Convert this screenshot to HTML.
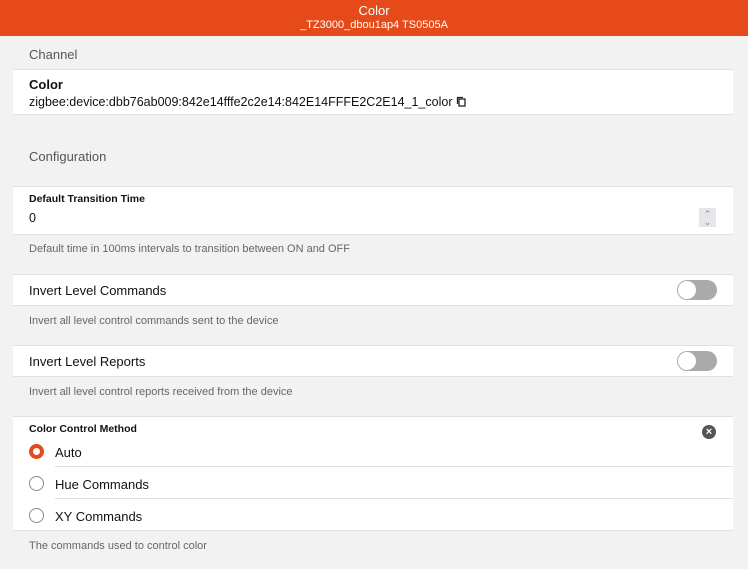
<!DOCTYPE html>
<html><head><style>
body{margin:0;width:748px;height:569px;background:#f2f2f2;font-family:"Liberation Sans",sans-serif;position:relative;overflow:hidden;color:#111}
.a{position:absolute}
.hdr{left:0;top:0;width:748px;height:36px;background:#e64a19;color:#fff;text-align:center}
.p{position:absolute;left:13px;width:720px;background:#fff;border-top:1px solid #e0e0e0;border-bottom:1px solid #e0e0e0}
.sec{left:29px;font-size:13px;color:#555}
.d{left:29px;font-size:11px;color:#666}
.t{left:29px;font-size:13px}
.tg{position:absolute;left:677px;width:40px;height:20px;border-radius:10px;background:#aaa}
.tg::after{content:"";position:absolute;left:1px;top:1px;width:18px;height:18px;border-radius:50%;background:#fff}
.r{position:absolute;left:29px;width:15px;height:15px;border-radius:50%;border:1.5px solid #888;box-sizing:border-box}
</style></head><body>
<div class="a hdr"><div style="font-size:13px;padding-top:3px">Color</div><div style="font-size:11px;margin-top:1px">_TZ3000_dbou1ap4 TS0505A</div></div>
<div class="a sec" style="top:47px">Channel</div>
<div class="p" style="top:69px;height:44px"></div>
<div class="a" style="left:29px;top:77px;font-size:13px;font-weight:bold">Color</div>
<div class="a" style="left:29px;top:95px;font-size:12.5px">zigbee:device:dbb76ab009:842e14fffe2c2e14:842E14FFFE2C2E14_1_color <svg width="11" height="11" viewBox="0 0 11 11" style="vertical-align:-1px"><rect x="3" y="3" width="6" height="7" fill="none" stroke="#222" stroke-width="1.3"/><path d="M1.5 8V1.5H7" fill="none" stroke="#222" stroke-width="1.3"/></svg></div>
<div class="a sec" style="top:149px">Configuration</div>
<div class="p" style="top:186px;height:47px"></div>
<div class="a" style="left:29px;top:193px;font-size:10.5px;font-weight:bold">Default Transition Time</div>
<div class="a" style="left:29px;top:211px;font-size:12.5px">0</div>
<div class="a" style="left:699px;top:208px;width:17px;height:19px;background:#e6e6ea;color:#888;font-size:9px;line-height:8px;text-align:center"><div style="margin-top:2px">⌃</div><div>⌄</div></div>
<div class="a d" style="top:243px">Default time in 100ms intervals to transition between ON and OFF</div>
<div class="p" style="top:274px;height:30px"></div>
<div class="a t" style="top:283px">Invert Level Commands</div>
<div class="tg" style="top:280px"></div>
<div class="a d" style="top:315px">Invert all level control commands sent to the device</div>
<div class="p" style="top:345px;height:30px"></div>
<div class="a t" style="top:354px">Invert Level Reports</div>
<div class="tg" style="top:351px"></div>
<div class="a d" style="top:386px">Invert all level control reports received from the device</div>
<div class="p" style="top:416px;height:113px"></div>
<div class="a" style="left:29px;top:423px;font-size:10.5px;font-weight:bold">Color Control Method</div>
<div class="a" style="left:702px;top:425px;width:14px;height:14px;border-radius:50%;background:#555;color:#fff;font-size:11px;line-height:14px;text-align:center;font-weight:bold">×</div>
<div class="r" style="top:444px;border:4px solid #e64a19"></div>
<div class="a t" style="left:55px;top:445px">Auto</div>
<div class="a" style="left:55px;top:466px;width:678px;height:1px;background:#e0e0e0"></div>
<div class="r" style="top:476px"></div>
<div class="a t" style="left:55px;top:477px">Hue Commands</div>
<div class="a" style="left:55px;top:498px;width:678px;height:1px;background:#e0e0e0"></div>
<div class="r" style="top:508px"></div>
<div class="a t" style="left:55px;top:509px">XY Commands</div>
<div class="a d" style="top:540px">The commands used to control color</div>
</body></html>
